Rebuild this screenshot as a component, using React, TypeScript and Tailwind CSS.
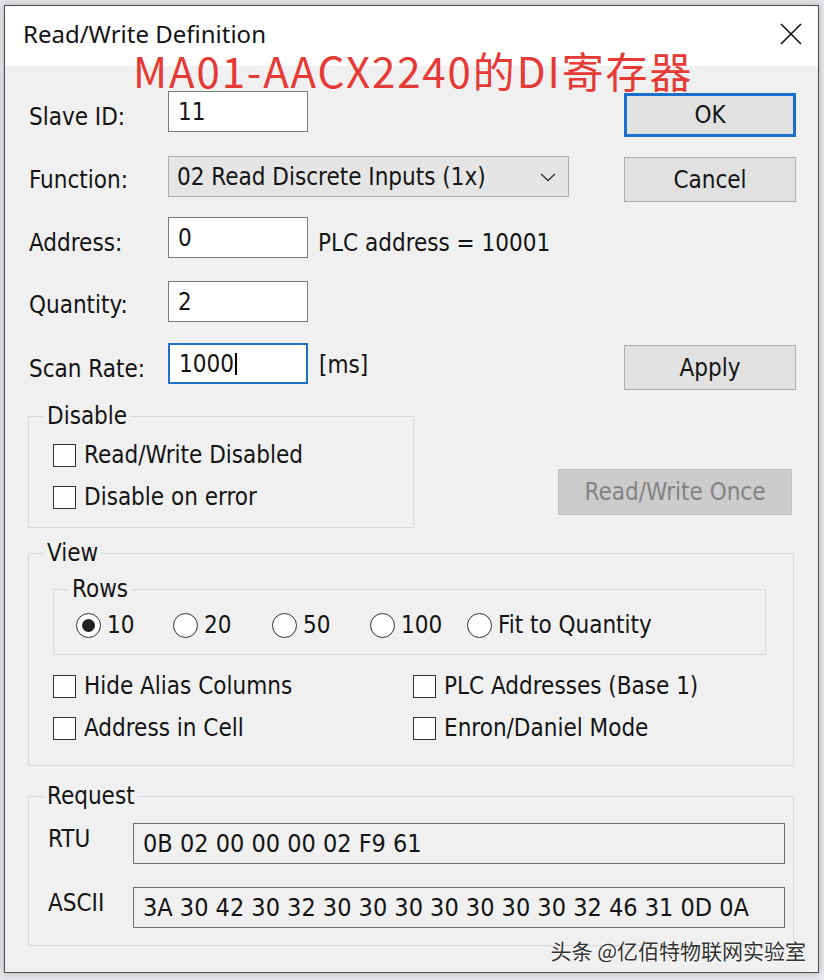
import { ReactNode } from "react";

// Modbus Poll style "Read/Write Definition" dialog

function TextBox({ value, focused, className }: { value: string; focused?: boolean; className?: string }) {
  return (
    <div
      className={`flex h-[41px] items-center bg-white pl-[9px] ${
        focused ? "border-2 border-[#1f72c4] pl-[8px]" : "border border-[#7a7a7a]"
      } ${className ?? "w-[140px]"}`}
    >
      <span>{value}</span>
      {focused && <span className="ml-[1px] h-[22px] w-[2px] bg-black" />}
    </div>
  );
}

function Button({
  children,
  primary,
  disabled,
  className,
}: {
  children: ReactNode;
  primary?: boolean;
  disabled?: boolean;
  className?: string;
}) {
  return (
    <button
      type="button"
      className={`flex items-center justify-center ${
        primary
          ? "border-[3px] border-[#1a6fcc] bg-[#e1e1e1]"
          : disabled
            ? "border border-[#bfbfbf] bg-[#cccccc] text-[#838383]"
            : "border border-[#adadad] bg-[#e1e1e1]"
      } ${className ?? "h-[44px] w-[171px]"}`}
    >
      {children}
    </button>
  );
}

function CheckBox({ label, className }: { label: string; className?: string }) {
  return (
    <div className={`flex h-[32px] items-center ${className ?? ""}`}>
      <span className="h-[23px] w-[23px] border border-[#333] bg-white" />
      <span className="ml-[8px]">{label}</span>
    </div>
  );
}

function Radio({ label, checked, className }: { label: string; checked?: boolean; className?: string }) {
  return (
    <div className={`flex h-[32px] items-center ${className ?? ""}`}>
      <span className="flex h-[25px] w-[25px] items-center justify-center rounded-full border border-[#333] bg-white">
        {checked && <span className="h-[13px] w-[13px] rounded-full bg-[#222]" />}
      </span>
      <span className="ml-[6px]">{label}</span>
    </div>
  );
}

function GroupBox({
  title,
  className,
  inner,
  children,
}: {
  title: string;
  className?: string;
  inner?: string;
  children: ReactNode;
}) {
  return (
    <fieldset className={`border border-[#d9d9d9] ${className ?? ""}`}>
      <legend className="ml-[15px] px-[3px] leading-[28px]">{title}</legend>
      <div className={inner}>{children}</div>
    </fieldset>
  );
}

export default function App() {
  return (
    <div className="min-h-screen bg-[#e4e6e9] pl-[4px] pt-[5px] text-[24px] text-[#141414] font-['DejaVu_Sans_Condensed','DejaVu_Sans',sans-serif]">
      <div className="relative flex h-[968px] w-[815px] flex-col border border-[#4d4d4d] bg-[#f0f0f0] shadow-[0_0_6px_rgba(0,0,0,0.25)]">
        {/* title bar */}
        <div className="flex h-[60px] shrink-0 items-center justify-between bg-white pl-[18px] pr-[16px] font-['Noto_Sans',sans-serif] text-[24px]">
          <span className="-mt-[4px] leading-[30px]">Read/Write Definition</span>
          <svg width="22" height="22" viewBox="0 0 22 22" className="-mt-[4px]">
            <path d="M1 1 L21 21 M21 1 L1 21" stroke="#111" strokeWidth="1.6" />
          </svg>
        </div>

        {/* red annotation over the dialog */}
        <div className="absolute left-[128px] top-[44px] text-[42px] leading-[40px] tracking-[1.9px] text-[#e53a36] font-['Noto_Sans_CJK_SC',sans-serif]">
          MA01-AACX2240的DI寄存器
        </div>

        {/* top fields + buttons */}
        <div className="flex pl-[24px]">
          <div className="w-[595px]">
            <div className="mt-[25px] flex h-[41px] items-center">
              <span className="mt-[10px] w-[139px]">Slave ID:</span>
              <TextBox value="11" />
            </div>
            <div className="mt-[24px] flex h-[41px] items-center">
              <span className="mt-[7px] w-[139px]">Function:</span>
              <div className="flex h-[41px] w-[401px] items-center justify-between border border-[#adadad] bg-[#e5e5e5] pl-[8px] pr-[12px]">
                <span>02 Read Discrete Inputs (1x)</span>
                <svg width="16" height="10" viewBox="0 0 16 10">
                  <path d="M1 2 L8 8.5 L15 2" fill="none" stroke="#333" strokeWidth="1.4" />
                </svg>
              </div>
            </div>
            <div className="mt-[20px] flex h-[41px] items-center">
              <span className="mt-[10px] w-[139px]">Address:</span>
              <TextBox value="0" />
              <span className="ml-[10px] mt-[10px]">PLC address = 10001</span>
            </div>
            <div className="mt-[23px] flex h-[41px] items-center">
              <span className="mt-[6px] w-[139px]">Quantity:</span>
              <TextBox value="2" />
            </div>
            <div className="mt-[21px] flex h-[41px] items-center">
              <span className="mt-[10px] w-[139px]">Scan Rate:</span>
              <TextBox value="1000" focused />
              <span className="ml-[11px] mt-[2px]">[ms]</span>
            </div>
          </div>
          <div className="flex flex-col">
            <Button primary className="mt-[27px] h-[44px] w-[172px]">
              OK
            </Button>
            <Button className="mt-[20px] h-[45px] w-[172px]">Cancel</Button>
            <Button className="mt-[143px] h-[45px] w-[172px]">Apply</Button>
          </div>
        </div>

        {/* disable group + read/write once */}
        <div className="mt-[12px] flex items-center pl-[23px]">
          <GroupBox title="Disable" className="w-[386px]" inner="pb-[14px] pl-[24px] pt-[9px]">
            <CheckBox label="Read/Write Disabled" />
            <CheckBox label="Disable on error" className="mt-[10px]" />
          </GroupBox>
          <Button disabled className="ml-[144px] mt-[54px] h-[46px] w-[234px]">
            Read/Write Once
          </Button>
        </div>

        {/* view group */}
        <GroupBox title="View" className="ml-[23px] mt-[11px] w-[766px]" inner="pb-[21px] pl-[24px] pt-[8px]">
          <GroupBox title="Rows" className="w-[713px]" inner="pb-[13px] pl-[22px] pt-[6px]">
            <div className="flex">
              <Radio label="10" checked className="w-[97px]" />
              <Radio label="20" className="w-[99px]" />
              <Radio label="50" className="w-[98px]" />
              <Radio label="100" className="w-[97px]" />
              <Radio label="Fit to Quantity" />
            </div>
          </GroupBox>
          <div className="mt-[15px] grid grid-cols-[360px_1fr] gap-y-[10px]">
            <CheckBox label="Hide Alias Columns" />
            <CheckBox label="PLC Addresses (Base 1)" />
            <CheckBox label="Address in Cell" />
            <CheckBox label="Enron/Daniel Mode" />
          </div>
        </GroupBox>

        {/* request group */}
        <GroupBox title="Request" className="ml-[23px] mt-[16px] w-[766px]" inner="pb-[17px] pl-[19px] pt-[13px]">
          <div className="flex">
            <span className="-mt-[2px] w-[85px]">RTU</span>
            <div className="flex h-[41px] w-[652px] items-center border border-[#6e6e6e] bg-[#f0f0f0] pl-[9px] text-[25px]">
              0B 02 00 00 00 02 F9 61
            </div>
          </div>
          <div className="mt-[23px] flex">
            <span className="-mt-[2px] w-[85px]">ASCII</span>
            <div className="flex h-[41px] w-[652px] items-center border border-[#6e6e6e] bg-[#f0f0f0] pl-[9px] text-[25px]">
              3A 30 42 30 32 30 30 30 30 30 30 30 32 46 31 0D 0A
            </div>
          </div>
        </GroupBox>

        {/* watermark */}
        <div className="absolute bottom-[9px] right-[12px] text-[21px] leading-[26px] text-[#333] [text-shadow:0_0_2px_#fff,0_0_2px_#fff] font-['Noto_Sans_CJK_SC',sans-serif]">
          头条 @亿佰特物联网实验室
        </div>
      </div>
    </div>
  );
}
